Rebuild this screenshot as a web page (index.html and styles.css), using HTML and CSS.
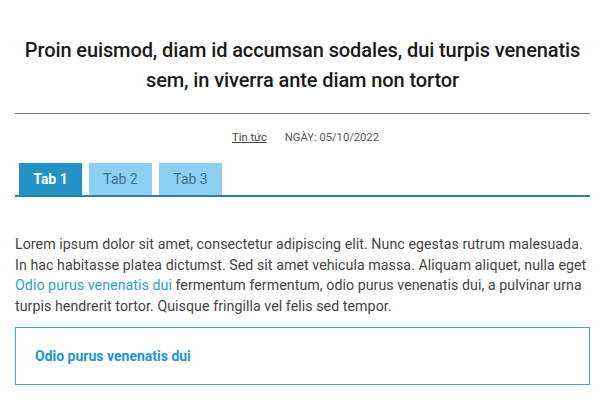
FILE: index.html
```html
<!DOCTYPE html>
<html lang="vi">
<head>
<meta charset="utf-8">
<link rel="stylesheet" href="styles.css">
</head>
<body>
<main class="article">
  <h1 class="title">Proin euismod, diam id accumsan sodales, dui turpis venenatis sem, in viverra ante diam non tortor</h1>
  <div class="meta">
    <a class="cat" href="#">Tin tức</a>
    <span class="date">NGÀY: 05/10/2022</span>
  </div>
  <nav class="tabs">
    <span class="tab active">Tab 1</span>
    <span class="tab">Tab 2</span>
    <span class="tab">Tab 3</span>
  </nav>
  <p class="text">Lorem ipsum dolor sit amet, consectetur adipiscing elit. Nunc egestas rutrum malesuada. In hac habitasse platea dictumst. Sed sit amet vehicula massa. Aliquam aliquet, nulla eget <a class="link" href="#">Odio purus venenatis dui</a> fermentum fermentum, odio purus venenatis dui, a pulvinar urna turpis hendrerit tortor. Quisque fringilla vel felis sed tempor.</p>
  <div class="box">Odio purus venenatis dui</div>
</main>
</body>
</html>
```
FILE: styles.css
```css
html, body {
  margin: 0;
  padding: 0;
  background: #ffffff;
}
body {
  font-family: Roboto, "Liberation Sans", sans-serif;
  color: #333;
  width: 600px;
  height: 400px;
  overflow: hidden;
}
.article {
  padding: 0 10px 0 15px;
}
.title {
  margin: 35px 0 0;
  padding: 0 0 18px;
  font-size: 20px;
  line-height: 30px;
  font-weight: 500;
  text-align: center;
  color: #1a1a1a;
  border-bottom: 1.5px solid #7a7a7a;
  letter-spacing: -0.1px;
}
.meta {
  margin-top: 16px;
  display: flex;
  justify-content: center;
  gap: 18px;
  padding-left: 6px;
  font-size: 11.2px;
  line-height: 16px;
  color: #555;
}
.cat {
  color: #444;
  text-decoration: underline;
}
.tabs {
  margin-top: 17px;
  display: flex;
  gap: 7px;
  padding-left: 4px;
  border-bottom: 2px solid #2a80a8;
}
.tab {
  height: 32px;
  line-height: 32px;
  width: 63px;
  text-align: center;
  background: #8ccff0;
  color: #3f6f8c;
  font-size: 14px;
}
.tab.active {
  background: #2492c6;
  color: #fff;
  font-weight: 700;
}
.text {
  margin: 37px 0 0;
  font-size: 14.2px;
  line-height: 20.7px;
  color: #444;
  letter-spacing: 0.06px;
}
.link {
  color: #2aa0d4;
  text-decoration: none;
}
.box {
  margin-top: 10px;
  height: 56px;
  border: 1.5px solid #3aa2dc;
  padding-left: 19px;
  display: flex;
  align-items: center;
  font-size: 14px;
  font-weight: 700;
  color: #2594cc;
}
```
